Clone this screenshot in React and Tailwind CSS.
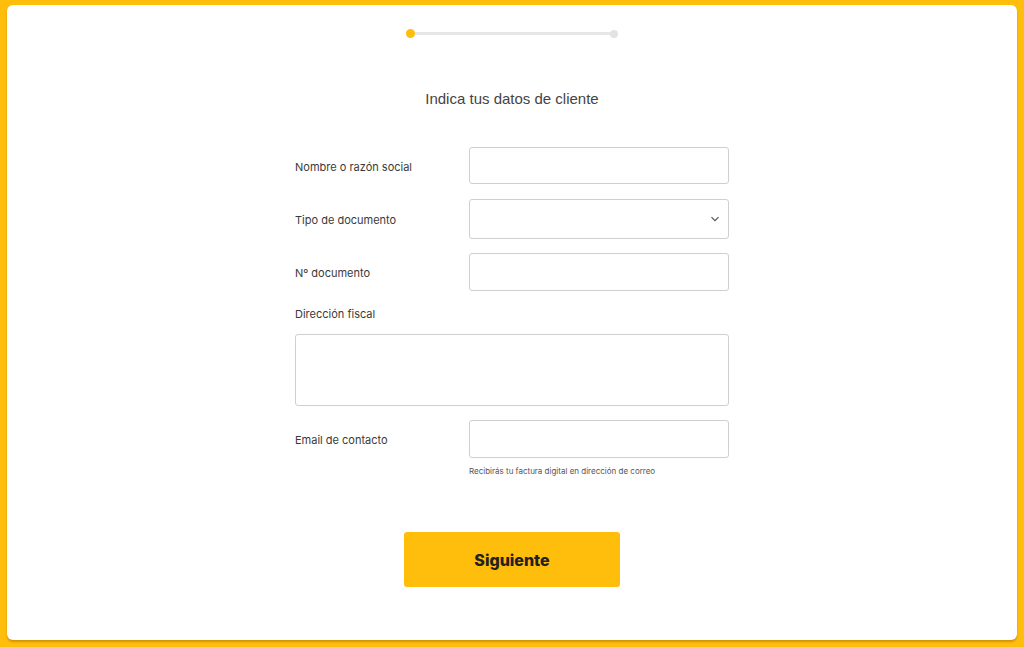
import React from "react";

// Step 1 of the invoice request: customer details form.

const labelCls = "w-[174px] flex-shrink-0 text-[11px] leading-[16px] text-[#3a3a3a] pt-[2px]";
const inputCls = "w-[260px] rounded-[3px] border border-[#cfcfcf] bg-white outline-none px-3 text-[12px]";

function Row({ label, children, className = "" }) {
  return (
    <div className={`flex items-center ${className}`}>
      <label className={labelCls}>{label}</label>
      {children}
    </div>
  );
}

export default function App() {
  return (
    <div
      className="h-[647px] bg-[#ffbe0b] pt-[5px] px-[7px] pb-[7px]"
      style={{ fontFamily: "Inter, 'Noto Sans', sans-serif" }}
    >
      <div className="h-full rounded-[6px] bg-white shadow-[0_2px_2px_rgba(150,100,0,0.45)] flex flex-col items-center">
        {/* Progress */}
        <div className="relative w-[212px] h-[9px] mt-[24px] flex items-center">
          <div className="absolute left-[3px] right-[3px] h-[3px] bg-[#e6e6e6]" />
          <span className="absolute left-0 w-[9px] h-[9px] rounded-full bg-[#ffbe0b]" />
          <span className="absolute right-0 w-[8px] h-[8px] rounded-full bg-[#e3e3e3]" />
        </div>

        <h1
          className="mt-[52px] text-[15px] leading-[18px] text-[#444]"
          style={{ fontFamily: "'Liberation Sans', Arial, sans-serif" }}
        >
          Indica tus datos de cliente
        </h1>

        <form className="w-[434px] mt-[39px]" onSubmit={(e) => e.preventDefault()}>
          <Row label="Nombre o razón social">
            <input className={`${inputCls} h-[37px]`} />
          </Row>
          <Row label="Tipo de documento" className="mt-[15px]">
            <div className="relative">
              <select className={`${inputCls} h-[40px] appearance-none`} defaultValue="">
                <option value="" />
              </select>
              <svg
                className="absolute right-[9px] top-[15px] w-[10px] h-[10px] pointer-events-none"
                viewBox="0 0 10 10"
                fill="none"
                stroke="#555"
                strokeWidth="1.2"
              >
                <path d="M1.5 3.2 5 6.7 8.5 3.2" />
              </svg>
            </div>
          </Row>
          <Row label="Nº documento" className="mt-[14px]">
            <input className={`${inputCls} h-[38px]`} />
          </Row>

          <label className="block mt-[15px] text-[11px] leading-[16px] text-[#3a3a3a]">Dirección fiscal</label>
          <textarea className="block mt-[12px] w-full h-[72px] rounded-[3px] border border-[#cfcfcf] resize-none outline-none p-2 text-[12px]" />

          <Row label="Email de contacto" className="mt-[14px]">
            <input type="email" className={`${inputCls} h-[38px]`} />
          </Row>
          <p className="ml-[174px] mt-[8px] text-[8px] leading-[10px] text-[#555]">
            Recibirás tu factura digital en dirección de correo
          </p>
        </form>

        <button
          type="button"
          className="mt-[56px] w-[216px] h-[55px] rounded-[3px] bg-[#ffbe0b] text-[16px] font-extrabold text-[#222]"
        >
          Siguiente
        </button>
      </div>
    </div>
  );
}
